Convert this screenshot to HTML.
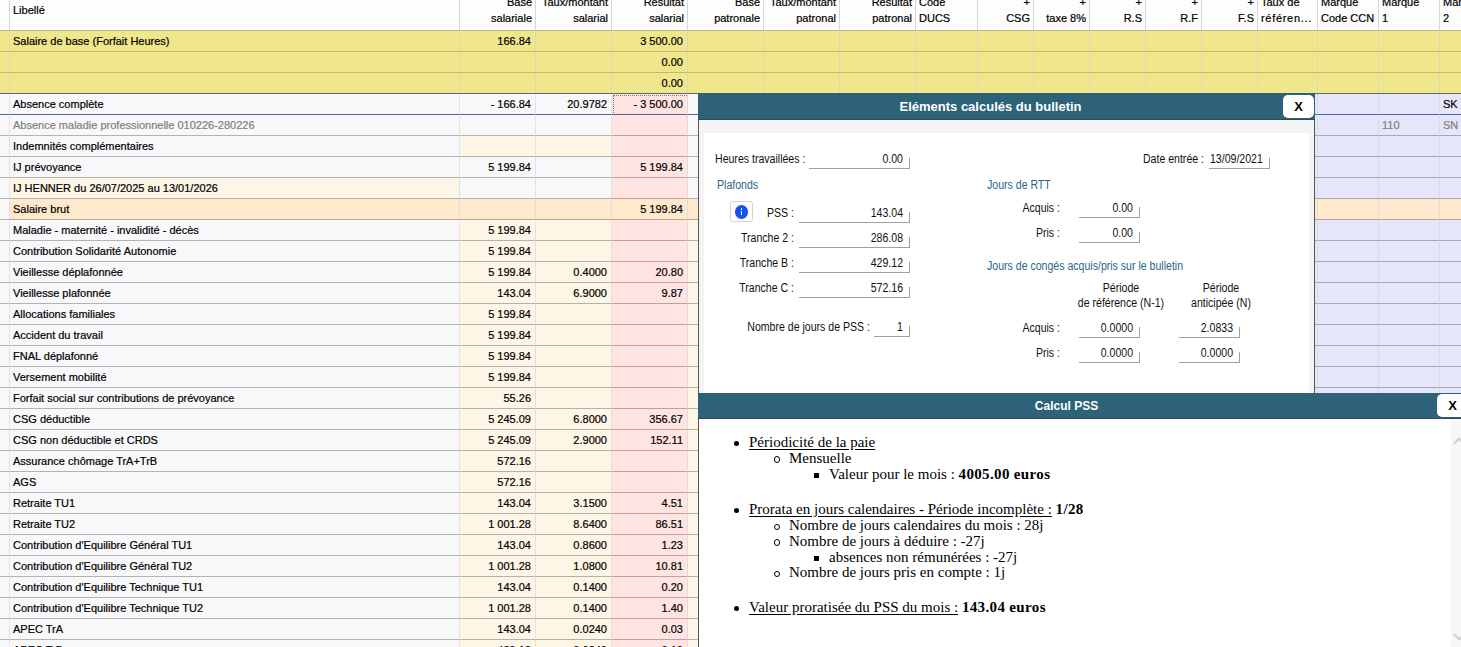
<!DOCTYPE html>
<html><head><meta charset="utf-8">
<style>
*{margin:0;padding:0;box-sizing:border-box}
html,body{width:1461px;height:647px;overflow:hidden;background:#fff}
body{position:relative;font-family:"Liberation Sans",sans-serif;font-size:11px;color:#000}
.hdr,.row{-webkit-text-stroke:0.2px currentColor}
.hdr{position:absolute;left:0;top:0;width:1500px;height:31px;background:#fdfdfd;border-bottom:1px solid #bcb88c}
.hdr .c{position:absolute;top:0;height:30px;border-right:1px solid #d6d6d6;overflow:hidden;padding:0 4px}
.hdr .h1{position:absolute;top:-4px;line-height:13px;white-space:nowrap}
.hdr .h2{position:absolute;top:12px;line-height:13px;white-space:nowrap}
.hdr .t1{position:absolute;top:4px;line-height:13px}
.hdr .c .h1,.hdr .c .h2,.hdr .c .t1{left:3px}
.hdr .c.r .h1,.hdr .c.r .h2{left:auto;right:3px}
.row{position:absolute;left:0;width:1500px;height:21px}
.row .c{position:absolute;top:0;height:21px;line-height:20px;border-bottom:1px solid rgba(0,0,0,0.28);padding:0 4px 0 3px;white-space:nowrap;overflow:hidden;border-right:1px solid rgba(210,210,210,0.55)}
.row .c.y{border-bottom-color:rgba(0,0,0,0.2)}
.row .c.r{text-align:right}
.y{background:#f0e68c}
.g{background:#f8f8fa}
.w{background:#f8f8fa}
.o{background:#fdf5e6}
.b{background:#ffe9cc}
.p{background:#ffe4e1}
.v{background:#e6e6fa}
.gr{color:#808080}
.row .c.focus:after{content:"";position:absolute;left:1px;top:1px;width:74px;height:18px;border:1px dotted #777}
.sel .c{border-bottom-color:#5060a8 !important}
.seltop{position:absolute;left:0;top:93px;width:1461px;height:1px;background:#5a6878}
/* dialogs */
.dlg{position:absolute;background:#f4f4f4;border:1px solid #555}
.tbar{position:absolute;left:0;top:0;right:0;height:26px;background:#2d6279;border-bottom:1px solid #3a4650;color:#fff;font-weight:bold}
.tbar .tt{position:absolute;top:1px;line-height:26px;text-align:center}
.xbtn{position:absolute;background:#fff;border-radius:5px;color:#000;font-weight:bold;text-align:center;font-size:13px}
.panel{position:absolute;background:#fff}
.lbl{position:absolute;font-size:12px;transform:scaleX(0.88);color:#111;white-space:nowrap;line-height:14px}
.lbl.r{text-align:right}
.blue{color:#2a6488}
.inp{position:absolute;height:10px;border-bottom:1px solid #a0a0a0;border-right:1px solid #a0a0a0}
.val{position:absolute;font-size:11px;letter-spacing:-0.25px;color:#1a1a1a;white-space:nowrap;line-height:13px;text-align:right}
.pss{position:absolute;font-family:"Liberation Serif",serif;font-size:15px;line-height:16px;color:#000}
.pss ul{margin:0;padding:0;list-style:none}
.pss li{position:absolute;white-space:nowrap}
.pss u{text-decoration:underline;text-underline-offset:1.5px}
.pss b{letter-spacing:0.35px}
.info{position:absolute;border:1px solid #d4d4d4;background:#fdfdfd;border-radius:3px}
.ic{position:absolute;left:3.5px;top:3px;width:13.5px;height:13.5px;border-radius:50%;background:#1552ee}
.ic:before{content:"";position:absolute;left:6px;top:3.3px;width:1.6px;height:1.6px;background:#fff}
.ic:after{content:"";position:absolute;left:6px;top:6.2px;width:1.6px;height:4.3px;background:#fff}
.sb{position:absolute;background:#f7f7f7}
.chev{position:absolute;width:8px;height:8px;border-left:2px solid #cfcfcf;border-top:2px solid #cfcfcf;transform:rotate(45deg)}
.chev.dn{transform:rotate(225deg)}
.disc{position:absolute;width:5px;height:5px;border-radius:50%;background:#000}
.circ{position:absolute;width:6.5px;height:6.5px;border-radius:50%;border:1px solid #000}
.sq{position:absolute;width:5px;height:5px;background:#000}
</style></head><body>
<div class="hdr">
<div class="c" style="left:0px;width:10px"><span class="h1"></span><span class="h2"></span></div>
<div class="c" style="left:10px;width:450px"><span class="t1">Libellé</span></div>
<div class="c r" style="left:460px;width:76px"><span class="h1">Base</span><span class="h2">salariale</span></div>
<div class="c r" style="left:536px;width:76px"><span class="h1">Taux/montant</span><span class="h2">salarial</span></div>
<div class="c r" style="left:612px;width:76px"><span class="h1">Résultat</span><span class="h2">salarial</span></div>
<div class="c r" style="left:688px;width:76px"><span class="h1">Base</span><span class="h2">patronale</span></div>
<div class="c r" style="left:764px;width:76px"><span class="h1">Taux/montant</span><span class="h2">patronal</span></div>
<div class="c r" style="left:840px;width:76px"><span class="h1">Résultat</span><span class="h2">patronal</span></div>
<div class="c" style="left:916px;width:62px"><span class="h1">Code</span><span class="h2">DUCS</span></div>
<div class="c r" style="left:978px;width:56px"><span class="h1">+</span><span class="h2">CSG</span></div>
<div class="c r" style="left:1034px;width:56px"><span class="h1">+</span><span class="h2">taxe 8%</span></div>
<div class="c r" style="left:1090px;width:56px"><span class="h1">+</span><span class="h2">R.S</span></div>
<div class="c r" style="left:1146px;width:56px"><span class="h1">+</span><span class="h2">R.F</span></div>
<div class="c r" style="left:1202px;width:56px"><span class="h1">+</span><span class="h2">F.S</span></div>
<div class="c" style="left:1258px;width:60px"><span class="h1">Taux de</span><span class="h2"><span style="letter-spacing:0.7px">référen...</span></span></div>
<div class="c" style="left:1318px;width:61px"><span class="h1">Marque</span><span class="h2">Code CCN</span></div>
<div class="c" style="left:1379px;width:61px"><span class="h1">Marque</span><span class="h2">1</span></div>
<div class="c" style="left:1440px;width:61px"><span class="h1">Marque</span><span class="h2">2</span></div>
</div>
<div class="row" style="top:31px">
<div class="c y" style="left:0px;width:10px"></div>
<div class="c y" style="left:10px;width:450px">Salaire de base (Forfait Heures)</div>
<div class="c y r" style="left:460px;width:76px">166.84</div>
<div class="c y r" style="left:536px;width:76px"></div>
<div class="c y r" style="left:612px;width:76px">3 500.00</div>
<div class="c y" style="left:688px;width:76px"></div>
<div class="c y" style="left:764px;width:76px"></div>
<div class="c y" style="left:840px;width:76px"></div>
<div class="c y" style="left:916px;width:62px"></div>
<div class="c y" style="left:978px;width:56px"></div>
<div class="c y" style="left:1034px;width:56px"></div>
<div class="c y" style="left:1090px;width:56px"></div>
<div class="c y" style="left:1146px;width:56px"></div>
<div class="c y" style="left:1202px;width:56px"></div>
<div class="c y" style="left:1258px;width:60px"></div>
<div class="c y" style="left:1318px;width:61px"></div>
<div class="c y" style="left:1379px;width:61px"></div>
<div class="c y" style="left:1440px;width:61px"></div>
</div>
<div class="row" style="top:52px">
<div class="c y" style="left:0px;width:10px"></div>
<div class="c y" style="left:10px;width:450px"></div>
<div class="c y r" style="left:460px;width:76px"></div>
<div class="c y r" style="left:536px;width:76px"></div>
<div class="c y r" style="left:612px;width:76px">0.00</div>
<div class="c y" style="left:688px;width:76px"></div>
<div class="c y" style="left:764px;width:76px"></div>
<div class="c y" style="left:840px;width:76px"></div>
<div class="c y" style="left:916px;width:62px"></div>
<div class="c y" style="left:978px;width:56px"></div>
<div class="c y" style="left:1034px;width:56px"></div>
<div class="c y" style="left:1090px;width:56px"></div>
<div class="c y" style="left:1146px;width:56px"></div>
<div class="c y" style="left:1202px;width:56px"></div>
<div class="c y" style="left:1258px;width:60px"></div>
<div class="c y" style="left:1318px;width:61px"></div>
<div class="c y" style="left:1379px;width:61px"></div>
<div class="c y" style="left:1440px;width:61px"></div>
</div>
<div class="row" style="top:73px">
<div class="c y" style="left:0px;width:10px"></div>
<div class="c y" style="left:10px;width:450px"></div>
<div class="c y r" style="left:460px;width:76px"></div>
<div class="c y r" style="left:536px;width:76px"></div>
<div class="c y r" style="left:612px;width:76px">0.00</div>
<div class="c y" style="left:688px;width:76px"></div>
<div class="c y" style="left:764px;width:76px"></div>
<div class="c y" style="left:840px;width:76px"></div>
<div class="c y" style="left:916px;width:62px"></div>
<div class="c y" style="left:978px;width:56px"></div>
<div class="c y" style="left:1034px;width:56px"></div>
<div class="c y" style="left:1090px;width:56px"></div>
<div class="c y" style="left:1146px;width:56px"></div>
<div class="c y" style="left:1202px;width:56px"></div>
<div class="c y" style="left:1258px;width:60px"></div>
<div class="c y" style="left:1318px;width:61px"></div>
<div class="c y" style="left:1379px;width:61px"></div>
<div class="c y" style="left:1440px;width:61px"></div>
</div>
<div class="row sel" style="top:94px">
<div class="c w" style="left:0px;width:10px"></div>
<div class="c g" style="left:10px;width:450px">Absence complète</div>
<div class="c g r" style="left:460px;width:76px">- 166.84</div>
<div class="c g r" style="left:536px;width:76px">20.9782</div>
<div class="c p r focus" style="left:612px;width:76px">- 3 500.00</div>
<div class="c g" style="left:688px;width:76px"></div>
<div class="c g" style="left:764px;width:76px"></div>
<div class="c g" style="left:840px;width:76px"></div>
<div class="c g" style="left:916px;width:62px"></div>
<div class="c g" style="left:978px;width:56px"></div>
<div class="c g" style="left:1034px;width:56px"></div>
<div class="c g" style="left:1090px;width:56px"></div>
<div class="c g" style="left:1146px;width:56px"></div>
<div class="c g" style="left:1202px;width:56px"></div>
<div class="c v" style="left:1258px;width:60px"></div>
<div class="c v" style="left:1318px;width:61px"></div>
<div class="c v" style="left:1379px;width:61px"></div>
<div class="c v" style="left:1440px;width:61px">SK</div>
</div>
<div class="row" style="top:115px">
<div class="c w" style="left:0px;width:10px"></div>
<div class="c g gr" style="left:10px;width:450px">Absence maladie professionnelle 010226-280226</div>
<div class="c g r" style="left:460px;width:76px"></div>
<div class="c g r" style="left:536px;width:76px"></div>
<div class="c p r" style="left:612px;width:76px"></div>
<div class="c g" style="left:688px;width:76px"></div>
<div class="c g" style="left:764px;width:76px"></div>
<div class="c g" style="left:840px;width:76px"></div>
<div class="c g" style="left:916px;width:62px"></div>
<div class="c g" style="left:978px;width:56px"></div>
<div class="c g" style="left:1034px;width:56px"></div>
<div class="c g" style="left:1090px;width:56px"></div>
<div class="c g" style="left:1146px;width:56px"></div>
<div class="c g" style="left:1202px;width:56px"></div>
<div class="c v" style="left:1258px;width:60px"></div>
<div class="c v" style="left:1318px;width:61px"></div>
<div class="c v gr" style="left:1379px;width:61px">110</div>
<div class="c v gr" style="left:1440px;width:61px">SN</div>
</div>
<div class="row" style="top:136px">
<div class="c w" style="left:0px;width:10px"></div>
<div class="c g" style="left:10px;width:450px">Indemnités complémentaires</div>
<div class="c o r" style="left:460px;width:76px"></div>
<div class="c o r" style="left:536px;width:76px"></div>
<div class="c p r" style="left:612px;width:76px"></div>
<div class="c g" style="left:688px;width:76px"></div>
<div class="c g" style="left:764px;width:76px"></div>
<div class="c g" style="left:840px;width:76px"></div>
<div class="c g" style="left:916px;width:62px"></div>
<div class="c g" style="left:978px;width:56px"></div>
<div class="c g" style="left:1034px;width:56px"></div>
<div class="c g" style="left:1090px;width:56px"></div>
<div class="c g" style="left:1146px;width:56px"></div>
<div class="c g" style="left:1202px;width:56px"></div>
<div class="c v" style="left:1258px;width:60px"></div>
<div class="c v" style="left:1318px;width:61px"></div>
<div class="c v" style="left:1379px;width:61px"></div>
<div class="c v" style="left:1440px;width:61px"></div>
</div>
<div class="row" style="top:157px">
<div class="c w" style="left:0px;width:10px"></div>
<div class="c g" style="left:10px;width:450px">IJ prévoyance</div>
<div class="c g r" style="left:460px;width:76px">5 199.84</div>
<div class="c g r" style="left:536px;width:76px"></div>
<div class="c p r" style="left:612px;width:76px">5 199.84</div>
<div class="c g" style="left:688px;width:76px"></div>
<div class="c g" style="left:764px;width:76px"></div>
<div class="c g" style="left:840px;width:76px"></div>
<div class="c g" style="left:916px;width:62px"></div>
<div class="c g" style="left:978px;width:56px"></div>
<div class="c g" style="left:1034px;width:56px"></div>
<div class="c g" style="left:1090px;width:56px"></div>
<div class="c g" style="left:1146px;width:56px"></div>
<div class="c g" style="left:1202px;width:56px"></div>
<div class="c v" style="left:1258px;width:60px"></div>
<div class="c v" style="left:1318px;width:61px"></div>
<div class="c v" style="left:1379px;width:61px"></div>
<div class="c v" style="left:1440px;width:61px"></div>
</div>
<div class="row" style="top:178px">
<div class="c w" style="left:0px;width:10px"></div>
<div class="c o" style="left:10px;width:450px">IJ HENNER du 26/07/2025 au 13/01/2026</div>
<div class="c g r" style="left:460px;width:76px"></div>
<div class="c g r" style="left:536px;width:76px"></div>
<div class="c p r" style="left:612px;width:76px"></div>
<div class="c g" style="left:688px;width:76px"></div>
<div class="c g" style="left:764px;width:76px"></div>
<div class="c g" style="left:840px;width:76px"></div>
<div class="c g" style="left:916px;width:62px"></div>
<div class="c g" style="left:978px;width:56px"></div>
<div class="c g" style="left:1034px;width:56px"></div>
<div class="c g" style="left:1090px;width:56px"></div>
<div class="c g" style="left:1146px;width:56px"></div>
<div class="c g" style="left:1202px;width:56px"></div>
<div class="c v" style="left:1258px;width:60px"></div>
<div class="c v" style="left:1318px;width:61px"></div>
<div class="c v" style="left:1379px;width:61px"></div>
<div class="c v" style="left:1440px;width:61px"></div>
</div>
<div class="row" style="top:199px">
<div class="c w" style="left:0px;width:10px"></div>
<div class="c b" style="left:10px;width:450px">Salaire brut</div>
<div class="c b r" style="left:460px;width:76px"></div>
<div class="c b r" style="left:536px;width:76px"></div>
<div class="c b r" style="left:612px;width:76px">5 199.84</div>
<div class="c b" style="left:688px;width:76px"></div>
<div class="c b" style="left:764px;width:76px"></div>
<div class="c b" style="left:840px;width:76px"></div>
<div class="c b" style="left:916px;width:62px"></div>
<div class="c b" style="left:978px;width:56px"></div>
<div class="c b" style="left:1034px;width:56px"></div>
<div class="c b" style="left:1090px;width:56px"></div>
<div class="c b" style="left:1146px;width:56px"></div>
<div class="c b" style="left:1202px;width:56px"></div>
<div class="c b" style="left:1258px;width:60px"></div>
<div class="c b" style="left:1318px;width:61px"></div>
<div class="c b" style="left:1379px;width:61px"></div>
<div class="c b" style="left:1440px;width:61px"></div>
</div>
<div class="row" style="top:220px">
<div class="c w" style="left:0px;width:10px"></div>
<div class="c g" style="left:10px;width:450px">Maladie - maternité - invalidité - décès</div>
<div class="c o r" style="left:460px;width:76px">5 199.84</div>
<div class="c o r" style="left:536px;width:76px"></div>
<div class="c p r" style="left:612px;width:76px"></div>
<div class="c o" style="left:688px;width:76px"></div>
<div class="c o" style="left:764px;width:76px"></div>
<div class="c o" style="left:840px;width:76px"></div>
<div class="c o" style="left:916px;width:62px"></div>
<div class="c o" style="left:978px;width:56px"></div>
<div class="c o" style="left:1034px;width:56px"></div>
<div class="c o" style="left:1090px;width:56px"></div>
<div class="c o" style="left:1146px;width:56px"></div>
<div class="c o" style="left:1202px;width:56px"></div>
<div class="c v" style="left:1258px;width:60px"></div>
<div class="c v" style="left:1318px;width:61px"></div>
<div class="c v" style="left:1379px;width:61px"></div>
<div class="c v" style="left:1440px;width:61px"></div>
</div>
<div class="row" style="top:241px">
<div class="c w" style="left:0px;width:10px"></div>
<div class="c g" style="left:10px;width:450px">Contribution Solidarité Autonomie</div>
<div class="c o r" style="left:460px;width:76px">5 199.84</div>
<div class="c o r" style="left:536px;width:76px"></div>
<div class="c p r" style="left:612px;width:76px"></div>
<div class="c o" style="left:688px;width:76px"></div>
<div class="c o" style="left:764px;width:76px"></div>
<div class="c o" style="left:840px;width:76px"></div>
<div class="c o" style="left:916px;width:62px"></div>
<div class="c o" style="left:978px;width:56px"></div>
<div class="c o" style="left:1034px;width:56px"></div>
<div class="c o" style="left:1090px;width:56px"></div>
<div class="c o" style="left:1146px;width:56px"></div>
<div class="c o" style="left:1202px;width:56px"></div>
<div class="c v" style="left:1258px;width:60px"></div>
<div class="c v" style="left:1318px;width:61px"></div>
<div class="c v" style="left:1379px;width:61px"></div>
<div class="c v" style="left:1440px;width:61px"></div>
</div>
<div class="row" style="top:262px">
<div class="c w" style="left:0px;width:10px"></div>
<div class="c g" style="left:10px;width:450px">Vieillesse déplafonnée</div>
<div class="c o r" style="left:460px;width:76px">5 199.84</div>
<div class="c o r" style="left:536px;width:76px">0.4000</div>
<div class="c p r" style="left:612px;width:76px">20.80</div>
<div class="c o" style="left:688px;width:76px"></div>
<div class="c o" style="left:764px;width:76px"></div>
<div class="c o" style="left:840px;width:76px"></div>
<div class="c o" style="left:916px;width:62px"></div>
<div class="c o" style="left:978px;width:56px"></div>
<div class="c o" style="left:1034px;width:56px"></div>
<div class="c o" style="left:1090px;width:56px"></div>
<div class="c o" style="left:1146px;width:56px"></div>
<div class="c o" style="left:1202px;width:56px"></div>
<div class="c v" style="left:1258px;width:60px"></div>
<div class="c v" style="left:1318px;width:61px"></div>
<div class="c v" style="left:1379px;width:61px"></div>
<div class="c v" style="left:1440px;width:61px"></div>
</div>
<div class="row" style="top:283px">
<div class="c w" style="left:0px;width:10px"></div>
<div class="c g" style="left:10px;width:450px">Vieillesse plafonnée</div>
<div class="c o r" style="left:460px;width:76px">143.04</div>
<div class="c o r" style="left:536px;width:76px">6.9000</div>
<div class="c p r" style="left:612px;width:76px">9.87</div>
<div class="c o" style="left:688px;width:76px"></div>
<div class="c o" style="left:764px;width:76px"></div>
<div class="c o" style="left:840px;width:76px"></div>
<div class="c o" style="left:916px;width:62px"></div>
<div class="c o" style="left:978px;width:56px"></div>
<div class="c o" style="left:1034px;width:56px"></div>
<div class="c o" style="left:1090px;width:56px"></div>
<div class="c o" style="left:1146px;width:56px"></div>
<div class="c o" style="left:1202px;width:56px"></div>
<div class="c v" style="left:1258px;width:60px"></div>
<div class="c v" style="left:1318px;width:61px"></div>
<div class="c v" style="left:1379px;width:61px"></div>
<div class="c v" style="left:1440px;width:61px"></div>
</div>
<div class="row" style="top:304px">
<div class="c w" style="left:0px;width:10px"></div>
<div class="c g" style="left:10px;width:450px">Allocations familiales</div>
<div class="c o r" style="left:460px;width:76px">5 199.84</div>
<div class="c o r" style="left:536px;width:76px"></div>
<div class="c p r" style="left:612px;width:76px"></div>
<div class="c o" style="left:688px;width:76px"></div>
<div class="c o" style="left:764px;width:76px"></div>
<div class="c o" style="left:840px;width:76px"></div>
<div class="c o" style="left:916px;width:62px"></div>
<div class="c o" style="left:978px;width:56px"></div>
<div class="c o" style="left:1034px;width:56px"></div>
<div class="c o" style="left:1090px;width:56px"></div>
<div class="c o" style="left:1146px;width:56px"></div>
<div class="c o" style="left:1202px;width:56px"></div>
<div class="c v" style="left:1258px;width:60px"></div>
<div class="c v" style="left:1318px;width:61px"></div>
<div class="c v" style="left:1379px;width:61px"></div>
<div class="c v" style="left:1440px;width:61px"></div>
</div>
<div class="row" style="top:325px">
<div class="c w" style="left:0px;width:10px"></div>
<div class="c g" style="left:10px;width:450px">Accident du travail</div>
<div class="c o r" style="left:460px;width:76px">5 199.84</div>
<div class="c o r" style="left:536px;width:76px"></div>
<div class="c p r" style="left:612px;width:76px"></div>
<div class="c o" style="left:688px;width:76px"></div>
<div class="c o" style="left:764px;width:76px"></div>
<div class="c o" style="left:840px;width:76px"></div>
<div class="c o" style="left:916px;width:62px"></div>
<div class="c o" style="left:978px;width:56px"></div>
<div class="c o" style="left:1034px;width:56px"></div>
<div class="c o" style="left:1090px;width:56px"></div>
<div class="c o" style="left:1146px;width:56px"></div>
<div class="c o" style="left:1202px;width:56px"></div>
<div class="c v" style="left:1258px;width:60px"></div>
<div class="c v" style="left:1318px;width:61px"></div>
<div class="c v" style="left:1379px;width:61px"></div>
<div class="c v" style="left:1440px;width:61px"></div>
</div>
<div class="row" style="top:346px">
<div class="c w" style="left:0px;width:10px"></div>
<div class="c g" style="left:10px;width:450px">FNAL déplafonné</div>
<div class="c o r" style="left:460px;width:76px">5 199.84</div>
<div class="c o r" style="left:536px;width:76px"></div>
<div class="c p r" style="left:612px;width:76px"></div>
<div class="c o" style="left:688px;width:76px"></div>
<div class="c o" style="left:764px;width:76px"></div>
<div class="c o" style="left:840px;width:76px"></div>
<div class="c o" style="left:916px;width:62px"></div>
<div class="c o" style="left:978px;width:56px"></div>
<div class="c o" style="left:1034px;width:56px"></div>
<div class="c o" style="left:1090px;width:56px"></div>
<div class="c o" style="left:1146px;width:56px"></div>
<div class="c o" style="left:1202px;width:56px"></div>
<div class="c v" style="left:1258px;width:60px"></div>
<div class="c v" style="left:1318px;width:61px"></div>
<div class="c v" style="left:1379px;width:61px"></div>
<div class="c v" style="left:1440px;width:61px"></div>
</div>
<div class="row" style="top:367px">
<div class="c w" style="left:0px;width:10px"></div>
<div class="c g" style="left:10px;width:450px">Versement mobilité</div>
<div class="c o r" style="left:460px;width:76px">5 199.84</div>
<div class="c o r" style="left:536px;width:76px"></div>
<div class="c p r" style="left:612px;width:76px"></div>
<div class="c o" style="left:688px;width:76px"></div>
<div class="c o" style="left:764px;width:76px"></div>
<div class="c o" style="left:840px;width:76px"></div>
<div class="c o" style="left:916px;width:62px"></div>
<div class="c o" style="left:978px;width:56px"></div>
<div class="c o" style="left:1034px;width:56px"></div>
<div class="c o" style="left:1090px;width:56px"></div>
<div class="c o" style="left:1146px;width:56px"></div>
<div class="c o" style="left:1202px;width:56px"></div>
<div class="c v" style="left:1258px;width:60px"></div>
<div class="c v" style="left:1318px;width:61px"></div>
<div class="c v" style="left:1379px;width:61px"></div>
<div class="c v" style="left:1440px;width:61px"></div>
</div>
<div class="row" style="top:388px">
<div class="c w" style="left:0px;width:10px"></div>
<div class="c g" style="left:10px;width:450px">Forfait social sur contributions de prévoyance</div>
<div class="c o r" style="left:460px;width:76px">55.26</div>
<div class="c o r" style="left:536px;width:76px"></div>
<div class="c p r" style="left:612px;width:76px"></div>
<div class="c o" style="left:688px;width:76px"></div>
<div class="c o" style="left:764px;width:76px"></div>
<div class="c o" style="left:840px;width:76px"></div>
<div class="c o" style="left:916px;width:62px"></div>
<div class="c o" style="left:978px;width:56px"></div>
<div class="c o" style="left:1034px;width:56px"></div>
<div class="c o" style="left:1090px;width:56px"></div>
<div class="c o" style="left:1146px;width:56px"></div>
<div class="c o" style="left:1202px;width:56px"></div>
<div class="c v" style="left:1258px;width:60px"></div>
<div class="c v" style="left:1318px;width:61px"></div>
<div class="c v" style="left:1379px;width:61px"></div>
<div class="c v" style="left:1440px;width:61px"></div>
</div>
<div class="row" style="top:409px">
<div class="c w" style="left:0px;width:10px"></div>
<div class="c g" style="left:10px;width:450px">CSG déductible</div>
<div class="c o r" style="left:460px;width:76px">5 245.09</div>
<div class="c o r" style="left:536px;width:76px">6.8000</div>
<div class="c p r" style="left:612px;width:76px">356.67</div>
<div class="c o" style="left:688px;width:76px"></div>
<div class="c o" style="left:764px;width:76px"></div>
<div class="c o" style="left:840px;width:76px"></div>
<div class="c o" style="left:916px;width:62px"></div>
<div class="c o" style="left:978px;width:56px"></div>
<div class="c o" style="left:1034px;width:56px"></div>
<div class="c o" style="left:1090px;width:56px"></div>
<div class="c o" style="left:1146px;width:56px"></div>
<div class="c o" style="left:1202px;width:56px"></div>
<div class="c v" style="left:1258px;width:60px"></div>
<div class="c v" style="left:1318px;width:61px"></div>
<div class="c v" style="left:1379px;width:61px"></div>
<div class="c v" style="left:1440px;width:61px"></div>
</div>
<div class="row" style="top:430px">
<div class="c w" style="left:0px;width:10px"></div>
<div class="c g" style="left:10px;width:450px">CSG non déductible et CRDS</div>
<div class="c o r" style="left:460px;width:76px">5 245.09</div>
<div class="c o r" style="left:536px;width:76px">2.9000</div>
<div class="c p r" style="left:612px;width:76px">152.11</div>
<div class="c o" style="left:688px;width:76px"></div>
<div class="c o" style="left:764px;width:76px"></div>
<div class="c o" style="left:840px;width:76px"></div>
<div class="c o" style="left:916px;width:62px"></div>
<div class="c o" style="left:978px;width:56px"></div>
<div class="c o" style="left:1034px;width:56px"></div>
<div class="c o" style="left:1090px;width:56px"></div>
<div class="c o" style="left:1146px;width:56px"></div>
<div class="c o" style="left:1202px;width:56px"></div>
<div class="c v" style="left:1258px;width:60px"></div>
<div class="c v" style="left:1318px;width:61px"></div>
<div class="c v" style="left:1379px;width:61px"></div>
<div class="c v" style="left:1440px;width:61px"></div>
</div>
<div class="row" style="top:451px">
<div class="c w" style="left:0px;width:10px"></div>
<div class="c g" style="left:10px;width:450px">Assurance chômage TrA+TrB</div>
<div class="c o r" style="left:460px;width:76px">572.16</div>
<div class="c o r" style="left:536px;width:76px"></div>
<div class="c p r" style="left:612px;width:76px"></div>
<div class="c o" style="left:688px;width:76px"></div>
<div class="c o" style="left:764px;width:76px"></div>
<div class="c o" style="left:840px;width:76px"></div>
<div class="c o" style="left:916px;width:62px"></div>
<div class="c o" style="left:978px;width:56px"></div>
<div class="c o" style="left:1034px;width:56px"></div>
<div class="c o" style="left:1090px;width:56px"></div>
<div class="c o" style="left:1146px;width:56px"></div>
<div class="c o" style="left:1202px;width:56px"></div>
<div class="c v" style="left:1258px;width:60px"></div>
<div class="c v" style="left:1318px;width:61px"></div>
<div class="c v" style="left:1379px;width:61px"></div>
<div class="c v" style="left:1440px;width:61px"></div>
</div>
<div class="row" style="top:472px">
<div class="c w" style="left:0px;width:10px"></div>
<div class="c g" style="left:10px;width:450px">AGS</div>
<div class="c o r" style="left:460px;width:76px">572.16</div>
<div class="c o r" style="left:536px;width:76px"></div>
<div class="c p r" style="left:612px;width:76px"></div>
<div class="c o" style="left:688px;width:76px"></div>
<div class="c o" style="left:764px;width:76px"></div>
<div class="c o" style="left:840px;width:76px"></div>
<div class="c o" style="left:916px;width:62px"></div>
<div class="c o" style="left:978px;width:56px"></div>
<div class="c o" style="left:1034px;width:56px"></div>
<div class="c o" style="left:1090px;width:56px"></div>
<div class="c o" style="left:1146px;width:56px"></div>
<div class="c o" style="left:1202px;width:56px"></div>
<div class="c v" style="left:1258px;width:60px"></div>
<div class="c v" style="left:1318px;width:61px"></div>
<div class="c v" style="left:1379px;width:61px"></div>
<div class="c v" style="left:1440px;width:61px"></div>
</div>
<div class="row" style="top:493px">
<div class="c w" style="left:0px;width:10px"></div>
<div class="c g" style="left:10px;width:450px">Retraite TU1</div>
<div class="c o r" style="left:460px;width:76px">143.04</div>
<div class="c o r" style="left:536px;width:76px">3.1500</div>
<div class="c p r" style="left:612px;width:76px">4.51</div>
<div class="c o" style="left:688px;width:76px"></div>
<div class="c o" style="left:764px;width:76px"></div>
<div class="c o" style="left:840px;width:76px"></div>
<div class="c o" style="left:916px;width:62px"></div>
<div class="c o" style="left:978px;width:56px"></div>
<div class="c o" style="left:1034px;width:56px"></div>
<div class="c o" style="left:1090px;width:56px"></div>
<div class="c o" style="left:1146px;width:56px"></div>
<div class="c o" style="left:1202px;width:56px"></div>
<div class="c v" style="left:1258px;width:60px"></div>
<div class="c v" style="left:1318px;width:61px"></div>
<div class="c v" style="left:1379px;width:61px"></div>
<div class="c v" style="left:1440px;width:61px"></div>
</div>
<div class="row" style="top:514px">
<div class="c w" style="left:0px;width:10px"></div>
<div class="c g" style="left:10px;width:450px">Retraite TU2</div>
<div class="c o r" style="left:460px;width:76px">1 001.28</div>
<div class="c o r" style="left:536px;width:76px">8.6400</div>
<div class="c p r" style="left:612px;width:76px">86.51</div>
<div class="c o" style="left:688px;width:76px"></div>
<div class="c o" style="left:764px;width:76px"></div>
<div class="c o" style="left:840px;width:76px"></div>
<div class="c o" style="left:916px;width:62px"></div>
<div class="c o" style="left:978px;width:56px"></div>
<div class="c o" style="left:1034px;width:56px"></div>
<div class="c o" style="left:1090px;width:56px"></div>
<div class="c o" style="left:1146px;width:56px"></div>
<div class="c o" style="left:1202px;width:56px"></div>
<div class="c v" style="left:1258px;width:60px"></div>
<div class="c v" style="left:1318px;width:61px"></div>
<div class="c v" style="left:1379px;width:61px"></div>
<div class="c v" style="left:1440px;width:61px"></div>
</div>
<div class="row" style="top:535px">
<div class="c w" style="left:0px;width:10px"></div>
<div class="c g" style="left:10px;width:450px">Contribution d'Equilibre Général TU1</div>
<div class="c o r" style="left:460px;width:76px">143.04</div>
<div class="c o r" style="left:536px;width:76px">0.8600</div>
<div class="c p r" style="left:612px;width:76px">1.23</div>
<div class="c o" style="left:688px;width:76px"></div>
<div class="c o" style="left:764px;width:76px"></div>
<div class="c o" style="left:840px;width:76px"></div>
<div class="c o" style="left:916px;width:62px"></div>
<div class="c o" style="left:978px;width:56px"></div>
<div class="c o" style="left:1034px;width:56px"></div>
<div class="c o" style="left:1090px;width:56px"></div>
<div class="c o" style="left:1146px;width:56px"></div>
<div class="c o" style="left:1202px;width:56px"></div>
<div class="c v" style="left:1258px;width:60px"></div>
<div class="c v" style="left:1318px;width:61px"></div>
<div class="c v" style="left:1379px;width:61px"></div>
<div class="c v" style="left:1440px;width:61px"></div>
</div>
<div class="row" style="top:556px">
<div class="c w" style="left:0px;width:10px"></div>
<div class="c g" style="left:10px;width:450px">Contribution d'Equilibre Général TU2</div>
<div class="c o r" style="left:460px;width:76px">1 001.28</div>
<div class="c o r" style="left:536px;width:76px">1.0800</div>
<div class="c p r" style="left:612px;width:76px">10.81</div>
<div class="c o" style="left:688px;width:76px"></div>
<div class="c o" style="left:764px;width:76px"></div>
<div class="c o" style="left:840px;width:76px"></div>
<div class="c o" style="left:916px;width:62px"></div>
<div class="c o" style="left:978px;width:56px"></div>
<div class="c o" style="left:1034px;width:56px"></div>
<div class="c o" style="left:1090px;width:56px"></div>
<div class="c o" style="left:1146px;width:56px"></div>
<div class="c o" style="left:1202px;width:56px"></div>
<div class="c v" style="left:1258px;width:60px"></div>
<div class="c v" style="left:1318px;width:61px"></div>
<div class="c v" style="left:1379px;width:61px"></div>
<div class="c v" style="left:1440px;width:61px"></div>
</div>
<div class="row" style="top:577px">
<div class="c w" style="left:0px;width:10px"></div>
<div class="c g" style="left:10px;width:450px">Contribution d'Equilibre Technique TU1</div>
<div class="c o r" style="left:460px;width:76px">143.04</div>
<div class="c o r" style="left:536px;width:76px">0.1400</div>
<div class="c p r" style="left:612px;width:76px">0.20</div>
<div class="c o" style="left:688px;width:76px"></div>
<div class="c o" style="left:764px;width:76px"></div>
<div class="c o" style="left:840px;width:76px"></div>
<div class="c o" style="left:916px;width:62px"></div>
<div class="c o" style="left:978px;width:56px"></div>
<div class="c o" style="left:1034px;width:56px"></div>
<div class="c o" style="left:1090px;width:56px"></div>
<div class="c o" style="left:1146px;width:56px"></div>
<div class="c o" style="left:1202px;width:56px"></div>
<div class="c v" style="left:1258px;width:60px"></div>
<div class="c v" style="left:1318px;width:61px"></div>
<div class="c v" style="left:1379px;width:61px"></div>
<div class="c v" style="left:1440px;width:61px"></div>
</div>
<div class="row" style="top:598px">
<div class="c w" style="left:0px;width:10px"></div>
<div class="c g" style="left:10px;width:450px">Contribution d'Equilibre Technique TU2</div>
<div class="c o r" style="left:460px;width:76px">1 001.28</div>
<div class="c o r" style="left:536px;width:76px">0.1400</div>
<div class="c p r" style="left:612px;width:76px">1.40</div>
<div class="c o" style="left:688px;width:76px"></div>
<div class="c o" style="left:764px;width:76px"></div>
<div class="c o" style="left:840px;width:76px"></div>
<div class="c o" style="left:916px;width:62px"></div>
<div class="c o" style="left:978px;width:56px"></div>
<div class="c o" style="left:1034px;width:56px"></div>
<div class="c o" style="left:1090px;width:56px"></div>
<div class="c o" style="left:1146px;width:56px"></div>
<div class="c o" style="left:1202px;width:56px"></div>
<div class="c v" style="left:1258px;width:60px"></div>
<div class="c v" style="left:1318px;width:61px"></div>
<div class="c v" style="left:1379px;width:61px"></div>
<div class="c v" style="left:1440px;width:61px"></div>
</div>
<div class="row" style="top:619px">
<div class="c w" style="left:0px;width:10px"></div>
<div class="c g" style="left:10px;width:450px">APEC TrA</div>
<div class="c o r" style="left:460px;width:76px">143.04</div>
<div class="c o r" style="left:536px;width:76px">0.0240</div>
<div class="c p r" style="left:612px;width:76px">0.03</div>
<div class="c o" style="left:688px;width:76px"></div>
<div class="c o" style="left:764px;width:76px"></div>
<div class="c o" style="left:840px;width:76px"></div>
<div class="c o" style="left:916px;width:62px"></div>
<div class="c o" style="left:978px;width:56px"></div>
<div class="c o" style="left:1034px;width:56px"></div>
<div class="c o" style="left:1090px;width:56px"></div>
<div class="c o" style="left:1146px;width:56px"></div>
<div class="c o" style="left:1202px;width:56px"></div>
<div class="c v" style="left:1258px;width:60px"></div>
<div class="c v" style="left:1318px;width:61px"></div>
<div class="c v" style="left:1379px;width:61px"></div>
<div class="c v" style="left:1440px;width:61px"></div>
</div>
<div class="row" style="top:640px">
<div class="c w" style="left:0px;width:10px"></div>
<div class="c g" style="left:10px;width:450px">APEC TrB</div>
<div class="c o r" style="left:460px;width:76px">429.12</div>
<div class="c o r" style="left:536px;width:76px">0.0240</div>
<div class="c p r" style="left:612px;width:76px">0.10</div>
<div class="c o" style="left:688px;width:76px"></div>
<div class="c o" style="left:764px;width:76px"></div>
<div class="c o" style="left:840px;width:76px"></div>
<div class="c o" style="left:916px;width:62px"></div>
<div class="c o" style="left:978px;width:56px"></div>
<div class="c o" style="left:1034px;width:56px"></div>
<div class="c o" style="left:1090px;width:56px"></div>
<div class="c o" style="left:1146px;width:56px"></div>
<div class="c o" style="left:1202px;width:56px"></div>
<div class="c v" style="left:1258px;width:60px"></div>
<div class="c v" style="left:1318px;width:61px"></div>
<div class="c v" style="left:1379px;width:61px"></div>
<div class="c v" style="left:1440px;width:61px"></div>
</div>
<div class="seltop"></div>
<div class="dlg" style="left:698px;top:93px;width:617px;height:320px"></div>
<div class="tbar" style="left:698px;top:93px;width:617px;height:27px"><div class="tt" style="left:0;width:585px;font-size:13px">Eléments calculés du bulletin</div><div class="xbtn" style="left:585px;top:2px;width:31px;height:23px;line-height:23px">X</div></div>
<div class="panel" style="left:704px;top:133px;width:605px;height:260px"></div>
<div class="lbl" style="top:152px;left:715px;transform-origin:0 50%;">Heures travaillées :</div>
<div class="inp" style="left:809px;top:158px;width:101px;height:11px"></div><div class="lbl r" style="top:152px;left:603px;width:300px;transform-origin:100% 50%;">0.00</div>
<div class="lbl r" style="top:152px;left:904px;width:300px;transform-origin:100% 50%;">Date entrée :</div>
<div class="inp" style="left:1209px;top:158px;width:61px;height:11px"></div><div class="lbl" style="top:152px;left:1210px;transform-origin:0 50%;">13/09/2021</div>
<div class="lbl blue" style="top:178px;left:717px;transform-origin:0 50%;">Plafonds</div>
<div class="lbl blue" style="top:178px;left:987px;transform-origin:0 50%;">Jours de RTT</div>
<div class="info" style="left:730px;top:201px;width:23px;height:21px"><div class="ic"></div></div>
<div class="lbl r" style="top:206px;left:494px;width:300px;transform-origin:100% 50%;">PSS :</div>
<div class="inp" style="left:799px;top:212px;width:111px;height:11px"></div><div class="lbl r" style="top:206px;left:603px;width:300px;transform-origin:100% 50%;">143.04</div>
<div class="lbl r" style="top:231px;left:494px;width:300px;transform-origin:100% 50%;">Tranche 2 :</div>
<div class="inp" style="left:799px;top:237px;width:111px;height:11px"></div><div class="lbl r" style="top:231px;left:603px;width:300px;transform-origin:100% 50%;">286.08</div>
<div class="lbl r" style="top:256px;left:494px;width:300px;transform-origin:100% 50%;">Tranche B :</div>
<div class="inp" style="left:799px;top:262px;width:111px;height:11px"></div><div class="lbl r" style="top:256px;left:603px;width:300px;transform-origin:100% 50%;">429.12</div>
<div class="lbl r" style="top:281px;left:494px;width:300px;transform-origin:100% 50%;">Tranche C :</div>
<div class="inp" style="left:799px;top:287px;width:111px;height:11px"></div><div class="lbl r" style="top:281px;left:603px;width:300px;transform-origin:100% 50%;">572.16</div>
<div class="lbl r" style="top:320px;left:570px;width:300px;transform-origin:100% 50%;">Nombre de jours de PSS :</div>
<div class="inp" style="left:874px;top:326px;width:36px;height:11px"></div><div class="lbl r" style="top:320px;left:603px;width:300px;transform-origin:100% 50%;">1</div>
<div class="lbl r" style="top:201px;left:760px;width:300px;transform-origin:100% 50%;">Acquis :</div>
<div class="inp" style="left:1079px;top:207px;width:61px;height:11px"></div><div class="lbl r" style="top:201px;left:833px;width:300px;transform-origin:100% 50%;">0.00</div>
<div class="lbl r" style="top:226px;left:760px;width:300px;transform-origin:100% 50%;">Pris :</div>
<div class="inp" style="left:1079px;top:232px;width:61px;height:11px"></div><div class="lbl r" style="top:226px;left:833px;width:300px;transform-origin:100% 50%;">0.00</div>
<div class="lbl blue" style="top:259px;left:987px;transform-origin:0 50%;">Jours de congés acquis/pris sur le bulletin</div>
<div class="lbl" style="top:281px;left:1061px;width:120px;text-align:center;line-height:15px;transform-origin:50% 50%">Période<br>de référence (N-1)</div>
<div class="lbl" style="top:281px;left:1161px;width:120px;text-align:center;line-height:15px;transform-origin:50% 50%">Période<br>anticipée (N)</div>
<div class="lbl r" style="top:321px;left:760px;width:300px;transform-origin:100% 50%;">Acquis :</div>
<div class="inp" style="left:1079px;top:327px;width:61px;height:11px"></div><div class="lbl r" style="top:321px;left:833px;width:300px;transform-origin:100% 50%;">0.0000</div>
<div class="inp" style="left:1179px;top:327px;width:61px;height:11px"></div><div class="lbl r" style="top:321px;left:933px;width:300px;transform-origin:100% 50%;">2.0833</div>
<div class="lbl r" style="top:346px;left:760px;width:300px;transform-origin:100% 50%;">Pris :</div>
<div class="inp" style="left:1079px;top:352px;width:61px;height:11px"></div><div class="lbl r" style="top:346px;left:833px;width:300px;transform-origin:100% 50%;">0.0000</div>
<div class="inp" style="left:1179px;top:352px;width:61px;height:11px"></div><div class="lbl r" style="top:346px;left:933px;width:300px;transform-origin:100% 50%;">0.0000</div>
<div class="dlg" style="left:698px;top:393px;width:800px;height:300px;background:#fff"></div>
<div class="tbar" style="left:698px;top:393px;width:800px;height:26px"><div class="tt" style="left:0;top:0;width:737px;font-size:12px">Calcul PSS</div><div class="xbtn" style="left:739px;top:1px;width:31px;height:23px;line-height:23px">X</div></div>
<div class="sb" style="left:1451px;top:419px;width:10px;height:228px"></div>
<div class="chev" style="left:1455px;top:439px"></div>
<div class="chev dn" style="left:1455px;top:631px"></div>
<div class="disc" style="left:733.9px;top:441px"></div><div class="pss" style="top:434px;left:749px"><u>Périodicité de la paie</u></div>
<div class="circ" style="left:773.7px;top:456.0px"></div><div class="pss" style="top:449.5px;left:789px">Mensuelle</div>
<div class="sq" style="left:814.0px;top:473px"></div><div class="pss" style="top:466px;left:829px">Valeur pour le mois : <b>4005.00 euros</b></div>
<div class="disc" style="left:733.9px;top:508px"></div><div class="pss" style="top:501px;left:749px"><u>Prorata en jours calendaires - Période incomplète :</u> <b>1/28</b></div>
<div class="circ" style="left:773.7px;top:523.5px"></div><div class="pss" style="top:517px;left:789px">Nombre de jours calendaires du mois : 28j</div>
<div class="circ" style="left:773.7px;top:539.0px"></div><div class="pss" style="top:532.5px;left:789px">Nombre de jours à déduire : -27j</div>
<div class="sq" style="left:814.0px;top:555.5px"></div><div class="pss" style="top:548.5px;left:829px">absences non rémunérées : -27j</div>
<div class="circ" style="left:773.7px;top:570.5px"></div><div class="pss" style="top:564px;left:789px">Nombre de jours pris en compte : 1j</div>
<div class="disc" style="left:733.9px;top:606px"></div><div class="pss" style="top:599px;left:749px"><u>Valeur proratisée du PSS du mois :</u> <b>143.04 euros</b></div>
</body></html>
